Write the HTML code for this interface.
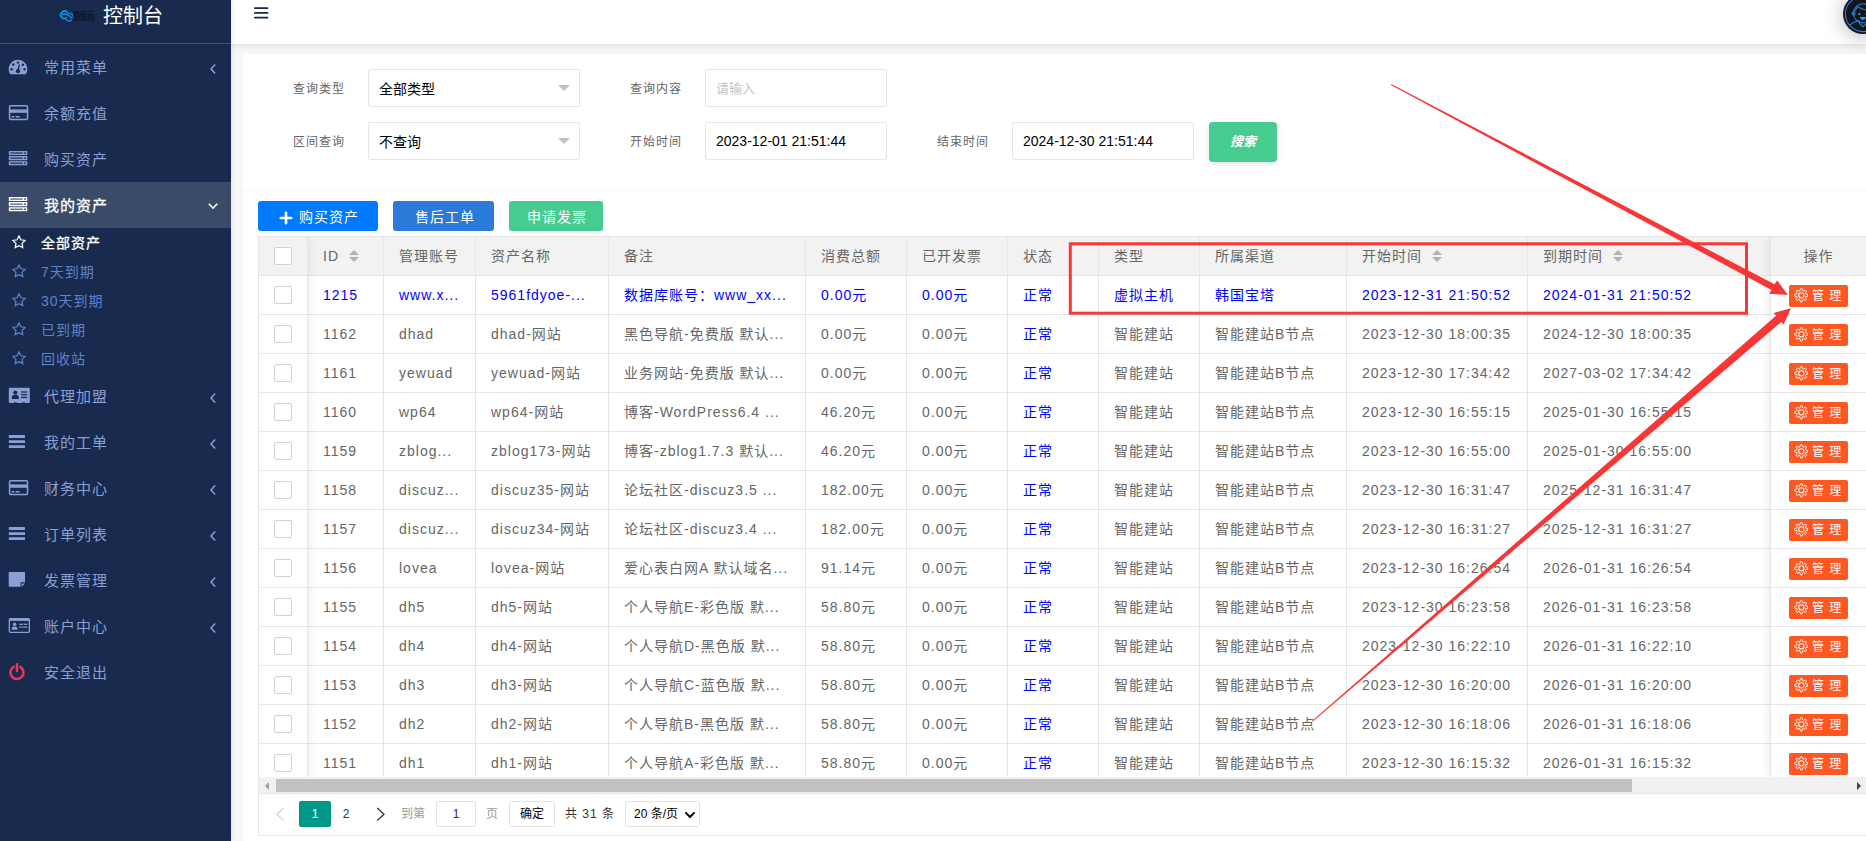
<!DOCTYPE html>
<html lang="zh-CN">
<head>
<meta charset="utf-8">
<title>控制台</title>
<style>
html,body{margin:0;padding:0}
body{width:1866px;height:841px;overflow:hidden;background:#f7f7f7;font-family:"Liberation Sans","Noto Sans CJK SC",sans-serif;font-size:14px;letter-spacing:1px;color:#666;position:relative}
*{box-sizing:border-box}
/* sidebar */
#side{position:absolute;left:0;top:0;width:231px;height:841px;background:#182a4e;z-index:5;box-shadow:1px 0 5px rgba(0,0,0,.10)}
#logo{position:absolute;left:0;top:0;width:231px;height:44px;border-bottom:1px solid #46536f}
#logo svg{position:absolute;left:58.500px;top:7.500px}
#logo .lt{position:absolute;left:73px;top:11px;font-size:7px;line-height:8px;color:#0b1426;font-weight:bold;letter-spacing:0;white-space:nowrap}
#logo .ls{position:absolute;left:72px;top:18.800px;font-size:2.700px;line-height:3px;color:#0b1426;font-weight:bold;letter-spacing:0;white-space:nowrap}
#logo .title{position:absolute;left:103px;top:1px;height:30px;line-height:30px;font-size:20px;color:#fff;letter-spacing:0;white-space:nowrap}
.mi{position:absolute;left:0;width:231px;height:46px;line-height:46px;color:#8a9fd4;font-size:15px;white-space:nowrap}
.mi.act{background:#3a4a69;color:#fff;-webkit-text-stroke:.300px #fff}
.mi .tx{position:absolute;left:44px;top:1px}
.mi svg.ic{position:absolute;left:8px;top:14px}
.mi svg.ch{position:absolute;left:207.500px;top:18.500px}
.sm{position:absolute;left:0;width:231px;height:29px;line-height:29px;color:#5d84c9;font-size:14px;white-space:nowrap}
.sm.act{color:#fff;-webkit-text-stroke:.300px #fff}
.sm .tx{position:absolute;left:41px;top:1px}
.sm svg{position:absolute;left:12px;top:7px}
/* header */
#top{position:absolute;left:231px;top:0;width:1635px;height:44px;background:#fff;box-shadow:0 1px 9px rgba(0,0,0,.11);z-index:3}
#ham{position:absolute;left:22.800px;top:7px}
#ava{position:absolute;left:1612px;top:-6.300px;z-index:4}
#avsh{position:absolute;left:1612px;top:-6px;width:40px;height:40px;border-radius:50%;box-shadow:0 2px 20px rgba(0,0,0,.30);z-index:3}
/* card */
#card{position:absolute;left:243px;top:54px;width:1623px;height:787px;background:#fff}
.lab{position:absolute;font-size:12px;color:#666;height:38px;line-height:38px;white-space:nowrap;margin-top:1px}
.inp{position:absolute;height:38px;border:1px solid #e6e6e6;border-radius:2px;background:#fff;font-size:14px;color:#000;letter-spacing:0;line-height:36px;padding-left:10px;white-space:nowrap}
.inp .cj{position:relative;top:1px}
.inp .ph{color:#c4c4c4;font-size:13px}
.inp .edge{position:absolute;right:9px;top:15px;width:0;height:0;border:6px solid transparent;border-top-color:#c2c2c2;border-bottom-width:0}
#sbtn{position:absolute;left:1209px;top:122px;width:68px;height:40px;background:#46cc91;border-radius:4px;box-shadow:0 2px 6px rgba(0,0,0,.10);color:#fff;font-size:13px;font-weight:bold;font-style:italic;text-align:center;line-height:40px;letter-spacing:0}
#hr{position:absolute;left:243px;top:190px;width:1623px;height:1px;background:#f6f6f6}
.btn{position:absolute;top:201px;height:30px;line-height:30px;border-radius:3px;color:#fff;font-size:14px;text-align:center;white-space:nowrap}
/* table */
#tbox{position:absolute;left:258px;top:236px;width:1608px;height:600px;border-left:1px solid #e6e6e6;border-top:1px solid #e6e6e6;border-bottom:1px solid #e6e6e6;overflow:hidden}
#tview{position:absolute;left:0;top:0;width:1607px;height:540px;overflow:hidden}
table{border-collapse:separate;border-spacing:0;table-layout:fixed;width:1529px}
th,td{height:39px;border-right:1px solid #e6e6e6;border-bottom:1px solid #e6e6e6;padding:0;font-weight:normal;text-align:left;vertical-align:middle}
th{background:#f2f2f2;color:#666}
td{background:#fff}
.cell{padding:0 15px;height:28px;line-height:28px;white-space:nowrap;overflow:hidden}
tr.blue td{color:#00f}
.cell.st{color:#00f}
.cb{display:block;width:18px;height:18px;border:1px solid #d2d2d2;border-radius:2px;background:#fff;margin:0 0 0 15px}
.sort{display:inline-block;position:relative;width:10px;height:14px;margin-left:10px;vertical-align:-2px}
.sort i{position:absolute;left:0;width:0;height:0;border:5px solid transparent}
.sort i.u{top:-4px;border-bottom-color:#b2b2b2}
.sort i.d{top:8px;border-top-color:#b2b2b2}
#fl{position:absolute;left:0;top:0;width:49px;height:540px;box-shadow:1px 0 8px rgba(0,0,0,.09);pointer-events:none}
#fr{position:absolute;left:1511px;top:0;width:96px;height:540px;background:#fff;border-left:1px solid #e6e6e6;box-shadow:-1px 0 8px rgba(0,0,0,.09)}
#fr .h{height:39px;line-height:38px;background:#f2f2f2;border-bottom:1px solid #e6e6e6;text-align:center;color:#666}
.oprow{height:39px;border-bottom:1px solid #e6e6e6;position:relative}
.mbtn{position:absolute;left:18px;top:9px;width:59px;height:22px;background:#ff5722;border-radius:2px;color:#fff;font-size:12px;line-height:22px;white-space:nowrap}
.mbtn .gear{position:absolute;left:4.700px;top:3.300px;width:14.600px;height:14.600px}
.mbtn .mt{position:absolute;left:23px;top:0}
/* scrollbar */
#sb{position:absolute;left:0;top:540px;width:1607px;height:17px;background:#f1f1f1}
#sb .th{position:absolute;left:17px;top:2px;width:1356px;height:13px;background:#c1c1c1}
#sb .al{position:absolute;left:6px;top:4.500px;width:0;height:0;border:4px solid transparent;border-right:4.500px solid #a3a3a3;border-left-width:0}
#sb .ar{position:absolute;right:5px;top:4.500px;width:0;height:0;border:4px solid transparent;border-left:4.500px solid #404040;border-right-width:0}
/* pager */
#pg{position:absolute;left:0;top:556px;width:1607px;height:42px;border-top:1px solid #e6e6e6;font-size:12px;color:#333;letter-spacing:0}
#pg .it{position:absolute;top:7px;height:26px;line-height:26px;white-space:nowrap}
#pg .box{border:1px solid #e2e2e2;border-radius:2px;background:#fff;text-align:center;line-height:24px}
/* annotations */
#ann{position:absolute;left:0;top:0;z-index:10;pointer-events:none}
</style>
</head>
<body>

<div id="side">
  <div id="logo">
    <svg width="16" height="16" viewBox="0 0 16 16"><g fill="none" stroke-linecap="round"><path d="M8.300 4.200C7 2.300 4.300 2.600 3.300 4.400 1.300 5 .8 7.800 2.400 9.200c.8 1.700 3.400 1.900 4.700.6" stroke="#0c9bee" stroke-width="1.700"/><path d="M7.600 11.700c1.300 1.900 4 1.600 5-.2 2-.6 2.500-3.400.9-4.800-.8-1.700-3.400-1.900-4.700-.6" stroke="#1877d6" stroke-width="1.700"/><path d="M3.500 6.600c2.500-1.300 6.500.8 8.800 2.900" stroke="#0c8fe6" stroke-width="1.500"/></g></svg>
    <span class="lt">鹏程云</span>
    <span class="ls">PENGCHENGYUN</span>
    <span class="title">控制台</span>
  </div>

<div class="mi" style="top:44px"><svg class="ic" width="24" height="18" viewBox="0 0 24 18"><path d="M2.220 16.200A9.300 9.300 0 1 1 17.780 16.200Z" fill="#8a9fd4"/><circle cx="10" cy="4.600" r="1.200" fill="#182a4e"/><circle cx="5.300" cy="6.500" r="1.200" fill="#182a4e"/><circle cx="14.900" cy="6.700" r="1.200" fill="#182a4e"/><circle cx="3.500" cy="11.300" r="1.200" fill="#182a4e"/><circle cx="16.500" cy="11.300" r="1.200" fill="#182a4e"/><circle cx="10" cy="13.200" r="2.100" fill="#182a4e"/><path d="M9.300 12.500L10.800 6.400l1.300.3-1.400 6.200z" fill="#182a4e"/></svg><span class="tx">常用菜单</span><svg class="ch" width="10" height="12" viewBox="0 0 10 12"><path d="M7.200 1.500L3 6l4.200 4.500" fill="none" stroke="#8a9fd4" stroke-width="1.500"/></svg></div>
<div class="mi" style="top:90px"><svg class="ic" width="24" height="18" viewBox="0 0 24 18"><rect x="1.550" y="1.650" width="18" height="13.800" rx="1.200" fill="none" stroke="#8a9fd4" stroke-width="1.500"/><rect x="1.500" y="5.400" width="18" height="3.400" fill="#8a9fd4"/><rect x="3.600" y="12" width="2.800" height="1.500" fill="#8a9fd4"/><rect x="7.700" y="12" width="3.900" height="1.500" fill="#8a9fd4"/></svg><span class="tx">余额充值</span></div>
<div class="mi" style="top:136px"><svg class="ic" width="24" height="18" viewBox="0 0 24 18"><rect x="0.800" y="1.0" width="18.500" height="4.050" rx=".500" fill="#8a9fd4"/><rect x="2.300" y="2.45" width="12.500" height="1.150" fill="#182a4e"/><rect x="16.200" y="2.28" width="1.700" height="1.500" fill="#182a4e"/><rect x="0.800" y="6.1" width="18.500" height="4.050" rx=".500" fill="#8a9fd4"/><rect x="2.300" y="7.55" width="12.500" height="1.150" fill="#182a4e"/><rect x="16.200" y="7.38" width="1.700" height="1.500" fill="#182a4e"/><rect x="0.800" y="11.2" width="18.500" height="4.050" rx=".500" fill="#8a9fd4"/><rect x="2.300" y="12.65" width="12.500" height="1.150" fill="#182a4e"/><rect x="16.200" y="12.48" width="1.700" height="1.500" fill="#182a4e"/></svg><span class="tx">购买资产</span></div>
<div class="mi act" style="top:182px"><svg class="ic" width="24" height="18" viewBox="0 0 24 18"><rect x="0.800" y="1.0" width="18.500" height="4.050" rx=".500" fill="#fff"/><rect x="2.300" y="2.45" width="12.500" height="1.150" fill="#3a4a69"/><rect x="16.200" y="2.28" width="1.700" height="1.500" fill="#3a4a69"/><rect x="0.800" y="6.1" width="18.500" height="4.050" rx=".500" fill="#fff"/><rect x="2.300" y="7.55" width="12.500" height="1.150" fill="#3a4a69"/><rect x="16.200" y="7.38" width="1.700" height="1.500" fill="#3a4a69"/><rect x="0.800" y="11.2" width="18.500" height="4.050" rx=".500" fill="#fff"/><rect x="2.300" y="12.65" width="12.500" height="1.150" fill="#3a4a69"/><rect x="16.200" y="12.48" width="1.700" height="1.500" fill="#3a4a69"/></svg><span class="tx">我的资产</span><svg class="ch" width="12" height="12" viewBox="0 0 12 12" style="left:207px;top:18px"><path d="M1.800 3.800L6 8l4.200-4.200" fill="none" stroke="#fff" stroke-width="1.600"/></svg></div>
<div class="sm act" style="top:228px"><svg width="14" height="14" viewBox="0 0 14 14"><path d="M7 .900l1.900 3.900 4.200.6-3.050 3 .72 4.200L7 10.600l-3.770 2 .72-4.200-3.050-3 4.200-.6z" fill="none" stroke="#fff" stroke-width="1.250" stroke-linejoin="miter"/></svg><span class="tx">全部资产</span></div>
<div class="sm" style="top:257px"><svg width="14" height="14" viewBox="0 0 14 14"><path d="M7 .900l1.900 3.900 4.200.6-3.050 3 .72 4.200L7 10.600l-3.770 2 .72-4.200-3.050-3 4.200-.6z" fill="none" stroke="#5d84c9" stroke-width="1.250" stroke-linejoin="miter"/></svg><span class="tx">7天到期</span></div>
<div class="sm" style="top:286px"><svg width="14" height="14" viewBox="0 0 14 14"><path d="M7 .900l1.900 3.900 4.200.6-3.050 3 .72 4.200L7 10.600l-3.770 2 .72-4.200-3.050-3 4.200-.6z" fill="none" stroke="#5d84c9" stroke-width="1.250" stroke-linejoin="miter"/></svg><span class="tx">30天到期</span></div>
<div class="sm" style="top:315px"><svg width="14" height="14" viewBox="0 0 14 14"><path d="M7 .900l1.900 3.900 4.200.6-3.050 3 .72 4.200L7 10.600l-3.770 2 .72-4.200-3.050-3 4.200-.6z" fill="none" stroke="#5d84c9" stroke-width="1.250" stroke-linejoin="miter"/></svg><span class="tx">已到期</span></div>
<div class="sm" style="top:344px"><svg width="14" height="14" viewBox="0 0 14 14"><path d="M7 .900l1.900 3.900 4.200.6-3.050 3 .72 4.200L7 10.600l-3.770 2 .72-4.200-3.050-3 4.200-.6z" fill="none" stroke="#5d84c9" stroke-width="1.250" stroke-linejoin="miter"/></svg><span class="tx">回收站</span></div>
<div class="mi" style="top:373px"><svg class="ic" width="24" height="18" viewBox="0 0 24 18"><path d="M1.800.800h19a1 1 0 0 1 1 1V15a1 1 0 0 1-1 1h-3.900v-.700h-2.500v.700H8.700v-.700H6.200v.700H1.800a1 1 0 0 1-1-1V1.800a1 1 0 0 1 1-1z" fill="#8a9fd4"/><circle cx="7.300" cy="5.500" r="2.100" fill="#182a4e"/><path d="M3.800 11.900V10.400c0-1.700 1.300-2.600 2.400-2.600h2.200c1.100 0 2.400.9 2.400 2.600v1.500z" fill="#182a4e"/><rect x="13" y="4.400" width="6.200" height="1.250" fill="#182a4e"/><rect x="13" y="7.100" width="6.200" height="1.250" fill="#182a4e"/><rect x="13" y="9.800" width="6.200" height="1.250" fill="#182a4e"/></svg><span class="tx">代理加盟</span><svg class="ch" width="10" height="12" viewBox="0 0 10 12"><path d="M7.200 1.500L3 6l4.200 4.500" fill="none" stroke="#8a9fd4" stroke-width="1.500"/></svg></div>
<div class="mi" style="top:419px"><svg class="ic" width="24" height="18" viewBox="0 0 24 18"><rect x="0.800" y="2.0" width="16.200" height="2.900" rx=".400" fill="#8a9fd4"/><rect x="0.800" y="7.2" width="16.200" height="2.900" rx=".400" fill="#8a9fd4"/><rect x="0.800" y="12.2" width="16.200" height="2.900" rx=".400" fill="#8a9fd4"/></svg><span class="tx">我的工单</span><svg class="ch" width="10" height="12" viewBox="0 0 10 12"><path d="M7.200 1.500L3 6l4.200 4.500" fill="none" stroke="#8a9fd4" stroke-width="1.500"/></svg></div>
<div class="mi" style="top:465px"><svg class="ic" width="24" height="18" viewBox="0 0 24 18"><rect x="1.550" y="1.650" width="18" height="13.800" rx="1.200" fill="none" stroke="#8a9fd4" stroke-width="1.500"/><rect x="1.500" y="5.400" width="18" height="3.400" fill="#8a9fd4"/><rect x="3.600" y="12" width="2.800" height="1.500" fill="#8a9fd4"/><rect x="7.700" y="12" width="3.900" height="1.500" fill="#8a9fd4"/></svg><span class="tx">财务中心</span><svg class="ch" width="10" height="12" viewBox="0 0 10 12"><path d="M7.200 1.500L3 6l4.200 4.500" fill="none" stroke="#8a9fd4" stroke-width="1.500"/></svg></div>
<div class="mi" style="top:511px"><svg class="ic" width="24" height="18" viewBox="0 0 24 18"><rect x="0.800" y="2.0" width="16.200" height="2.900" rx=".400" fill="#8a9fd4"/><rect x="0.800" y="7.2" width="16.200" height="2.900" rx=".400" fill="#8a9fd4"/><rect x="0.800" y="12.2" width="16.200" height="2.900" rx=".400" fill="#8a9fd4"/></svg><span class="tx">订单列表</span><svg class="ch" width="10" height="12" viewBox="0 0 10 12"><path d="M7.200 1.500L3 6l4.200 4.500" fill="none" stroke="#8a9fd4" stroke-width="1.500"/></svg></div>
<div class="mi" style="top:557px"><svg class="ic" width="24" height="18" viewBox="0 0 24 18"><path d="M1.500 1H16.200a.8.800 0 0 1 .8.800V11.300H13.300a.8.800 0 0 0-.8.800V15.700H1.500a.8.800 0 0 1-.8-.8V1.800A.8.800 0 0 1 1.500 1z" fill="#8a9fd4"/><path d="M13.600 12.400H17L13.600 15.700z" fill="#8a9fd4"/></svg><span class="tx">发票管理</span><svg class="ch" width="10" height="12" viewBox="0 0 10 12"><path d="M7.200 1.500L3 6l4.200 4.500" fill="none" stroke="#8a9fd4" stroke-width="1.500"/></svg></div>
<div class="mi" style="top:603px"><svg class="ic" width="24" height="18" viewBox="0 0 24 18"><rect x="1.350" y="1.650" width="20" height="13.700" rx="1.100" fill="none" stroke="#8a9fd4" stroke-width="1.300"/><rect x="1.300" y="1.600" width="20" height="2.300" fill="#8a9fd4"/><circle cx="6.600" cy="7.300" r="1.700" fill="#8a9fd4"/><path d="M3.800 12.700v-1.300c0-1.300 1-2 1.900-2h1.800c.9 0 1.900.7 1.900 2v1.300z" fill="#8a9fd4"/><rect x="11.200" y="6.700" width="8.200" height="1.200" fill="#8a9fd4"/><rect x="11.200" y="9.500" width="8.200" height="1.200" fill="#8a9fd4"/><rect x="15" y="6.700" width="1" height="1.200" fill="#182a4e"/><rect x="13.500" y="9.500" width="1" height="1.200" fill="#182a4e"/></svg><span class="tx">账户中心</span><svg class="ch" width="10" height="12" viewBox="0 0 10 12"><path d="M7.200 1.500L3 6l4.200 4.500" fill="none" stroke="#8a9fd4" stroke-width="1.500"/></svg></div>
<div class="mi" style="top:649px"><svg class="ic" width="24" height="18" viewBox="0 0 24 18"><path d="M5.600 3.900a6.500 6.500 0 1 0 6.700 0" fill="none" stroke="#ee3456" stroke-width="2.500" stroke-linecap="round"/><path d="M8.950 1.100v7" stroke="#ee3456" stroke-width="2.500" stroke-linecap="round"/></svg><span class="tx">安全退出</span></div>
</div>

<div id="top">
  <svg id="ham" width="16" height="13" viewBox="0 0 16 13"><g fill="#162a52"><rect x="0" y="0.150" width="14.400" height="1.900" rx=".900"/><rect x="0" y="4.900" width="14.400" height="1.900" rx=".900"/><rect x="0" y="9.650" width="14.400" height="1.900" rx=".900"/></g></svg>
  <div id="avsh"></div><svg id="ava" width="40" height="40" viewBox="0 0 40 40"><circle cx="20" cy="20" r="20" fill="#13161e"/><g fill="none" stroke="#2d7fd0" stroke-width="1.050"><circle cx="20" cy="20" r="17.600"/><circle cx="20" cy="19.300" r="9.600"/><circle cx="10.600" cy="19.600" r="1.500"/><path d="M11.500 17.500L14.800 12.700C18 15.500 23 16.700 29.300 15.700"/><path d="M6.800 31.200c3-3 7-4.200 9.700-4.700M33.200 31.200c-3-3-7-4.200-9.700-4.700M16.500 27v2.500l3.500 3.200 3.500-3.200V27"/></g><ellipse cx="16.400" cy="20" rx=".950" ry="1.350" fill="#2c9cff"/><ellipse cx="23.600" cy="20" rx=".950" ry="1.350" fill="#2c9cff"/><path d="M17.100 23h5.600a2.800 2.800 0 0 1-5.600 0z" fill="#2c9cff"/></svg>
</div>

<div id="card"></div>

<span class="lab" style="left:293px;top:69px">查询类型</span>
<div class="inp" style="left:368px;top:69px;width:212px"><span class="cj">全部类型</span><i class="edge"></i></div>
<span class="lab" style="left:630px;top:69px">查询内容</span>
<div class="inp" style="left:705px;top:69px;width:182px"><span class="ph">请输入</span></div>

<span class="lab" style="left:293px;top:122px">区间查询</span>
<div class="inp" style="left:368px;top:122px;width:212px"><span class="cj">不查询</span><i class="edge"></i></div>
<span class="lab" style="left:630px;top:122px">开始时间</span>
<div class="inp" style="left:705px;top:122px;width:182px">2023-12-01 21:51:44</div>
<span class="lab" style="left:937px;top:122px">结束时间</span>
<div class="inp" style="left:1012px;top:122px;width:182px">2024-12-30 21:51:44</div>
<div id="sbtn">搜索</div>

<div id="hr"></div>

<div class="btn" style="left:258px;width:120px;background:#007bff"><svg width="14" height="14" viewBox="0 0 14 14" style="position:absolute;left:21.200px;top:9.600px"><path d="M7 1.800v10.400M1.800 7h10.400" stroke="#fff" stroke-width="2.600" stroke-linecap="round"/></svg><span style="position:absolute;left:41px;top:1px">购买资产</span></div>
<div class="btn" style="left:393px;width:101px;background:#2a7ad9"><span style="position:absolute;left:22px;top:1px">售后工单</span></div>
<div class="btn" style="left:509px;width:94px;background:#46cc91"><span style="position:absolute;left:18px;top:1px">申请发票</span></div>

<div id="tbox">
  <div id="tview">
    <table>
      <colgroup><col style="width:49px"><col style="width:76px"><col style="width:92px"><col style="width:133px"><col style="width:197px"><col style="width:101px"><col style="width:101px"><col style="width:91px"><col style="width:101px"><col style="width:147px"><col style="width:181px"><col style="width:260px"></colgroup>
      <thead><tr>
        <th class="c0"><span class="cb"></span></th>
        <th><div class="cell">ID<span class="sort"><i class="u"></i><i class="d"></i></span></div></th>
        <th><div class="cell">管理账号</div></th>
        <th><div class="cell">资产名称</div></th>
        <th><div class="cell">备注</div></th>
        <th><div class="cell">消费总额</div></th>
        <th><div class="cell">已开发票</div></th>
        <th><div class="cell">状态</div></th>
        <th><div class="cell">类型</div></th>
        <th><div class="cell">所属渠道</div></th>
        <th><div class="cell">开始时间<span class="sort"><i class="u"></i><i class="d"></i></span></div></th>
        <th><div class="cell">到期时间<span class="sort"><i class="u"></i><i class="d"></i></span></div></th>
      </tr></thead>
      <tbody>
<tr class="blue"><td class="c0"><span class="cb"></span></td><td><div class="cell">1215</div></td><td><div class="cell">www.x...</div></td><td><div class="cell">5961fdyoe-...</div></td><td><div class="cell">数据库账号：www_xx...</div></td><td><div class="cell">0.00元</div></td><td><div class="cell">0.00元</div></td><td><div class="cell st">正常</div></td><td><div class="cell">虚拟主机</div></td><td><div class="cell">韩国宝塔</div></td><td><div class="cell">2023-12-31 21:50:52</div></td><td><div class="cell">2024-01-31 21:50:52</div></td></tr>
<tr><td class="c0"><span class="cb"></span></td><td><div class="cell">1162</div></td><td><div class="cell">dhad</div></td><td><div class="cell">dhad-网站</div></td><td><div class="cell">黑色导航-免费版 默认...</div></td><td><div class="cell">0.00元</div></td><td><div class="cell">0.00元</div></td><td><div class="cell st">正常</div></td><td><div class="cell">智能建站</div></td><td><div class="cell">智能建站B节点</div></td><td><div class="cell">2023-12-30 18:00:35</div></td><td><div class="cell">2024-12-30 18:00:35</div></td></tr>
<tr><td class="c0"><span class="cb"></span></td><td><div class="cell">1161</div></td><td><div class="cell">yewuad</div></td><td><div class="cell">yewuad-网站</div></td><td><div class="cell">业务网站-免费版 默认...</div></td><td><div class="cell">0.00元</div></td><td><div class="cell">0.00元</div></td><td><div class="cell st">正常</div></td><td><div class="cell">智能建站</div></td><td><div class="cell">智能建站B节点</div></td><td><div class="cell">2023-12-30 17:34:42</div></td><td><div class="cell">2027-03-02 17:34:42</div></td></tr>
<tr><td class="c0"><span class="cb"></span></td><td><div class="cell">1160</div></td><td><div class="cell">wp64</div></td><td><div class="cell">wp64-网站</div></td><td><div class="cell">博客-WordPress6.4 ...</div></td><td><div class="cell">46.20元</div></td><td><div class="cell">0.00元</div></td><td><div class="cell st">正常</div></td><td><div class="cell">智能建站</div></td><td><div class="cell">智能建站B节点</div></td><td><div class="cell">2023-12-30 16:55:15</div></td><td><div class="cell">2025-01-30 16:55:15</div></td></tr>
<tr><td class="c0"><span class="cb"></span></td><td><div class="cell">1159</div></td><td><div class="cell">zblog...</div></td><td><div class="cell">zblog173-网站</div></td><td><div class="cell">博客-zblog1.7.3 默认...</div></td><td><div class="cell">46.20元</div></td><td><div class="cell">0.00元</div></td><td><div class="cell st">正常</div></td><td><div class="cell">智能建站</div></td><td><div class="cell">智能建站B节点</div></td><td><div class="cell">2023-12-30 16:55:00</div></td><td><div class="cell">2025-01-30 16:55:00</div></td></tr>
<tr><td class="c0"><span class="cb"></span></td><td><div class="cell">1158</div></td><td><div class="cell">discuz...</div></td><td><div class="cell">discuz35-网站</div></td><td><div class="cell">论坛社区-discuz3.5 ...</div></td><td><div class="cell">182.00元</div></td><td><div class="cell">0.00元</div></td><td><div class="cell st">正常</div></td><td><div class="cell">智能建站</div></td><td><div class="cell">智能建站B节点</div></td><td><div class="cell">2023-12-30 16:31:47</div></td><td><div class="cell">2025-12-31 16:31:47</div></td></tr>
<tr><td class="c0"><span class="cb"></span></td><td><div class="cell">1157</div></td><td><div class="cell">discuz...</div></td><td><div class="cell">discuz34-网站</div></td><td><div class="cell">论坛社区-discuz3.4 ...</div></td><td><div class="cell">182.00元</div></td><td><div class="cell">0.00元</div></td><td><div class="cell st">正常</div></td><td><div class="cell">智能建站</div></td><td><div class="cell">智能建站B节点</div></td><td><div class="cell">2023-12-30 16:31:27</div></td><td><div class="cell">2025-12-31 16:31:27</div></td></tr>
<tr><td class="c0"><span class="cb"></span></td><td><div class="cell">1156</div></td><td><div class="cell">lovea</div></td><td><div class="cell">lovea-网站</div></td><td><div class="cell">爱心表白网A 默认域名...</div></td><td><div class="cell">91.14元</div></td><td><div class="cell">0.00元</div></td><td><div class="cell st">正常</div></td><td><div class="cell">智能建站</div></td><td><div class="cell">智能建站B节点</div></td><td><div class="cell">2023-12-30 16:26:54</div></td><td><div class="cell">2026-01-31 16:26:54</div></td></tr>
<tr><td class="c0"><span class="cb"></span></td><td><div class="cell">1155</div></td><td><div class="cell">dh5</div></td><td><div class="cell">dh5-网站</div></td><td><div class="cell">个人导航E-彩色版 默...</div></td><td><div class="cell">58.80元</div></td><td><div class="cell">0.00元</div></td><td><div class="cell st">正常</div></td><td><div class="cell">智能建站</div></td><td><div class="cell">智能建站B节点</div></td><td><div class="cell">2023-12-30 16:23:58</div></td><td><div class="cell">2026-01-31 16:23:58</div></td></tr>
<tr><td class="c0"><span class="cb"></span></td><td><div class="cell">1154</div></td><td><div class="cell">dh4</div></td><td><div class="cell">dh4-网站</div></td><td><div class="cell">个人导航D-黑色版 默...</div></td><td><div class="cell">58.80元</div></td><td><div class="cell">0.00元</div></td><td><div class="cell st">正常</div></td><td><div class="cell">智能建站</div></td><td><div class="cell">智能建站B节点</div></td><td><div class="cell">2023-12-30 16:22:10</div></td><td><div class="cell">2026-01-31 16:22:10</div></td></tr>
<tr><td class="c0"><span class="cb"></span></td><td><div class="cell">1153</div></td><td><div class="cell">dh3</div></td><td><div class="cell">dh3-网站</div></td><td><div class="cell">个人导航C-蓝色版 默...</div></td><td><div class="cell">58.80元</div></td><td><div class="cell">0.00元</div></td><td><div class="cell st">正常</div></td><td><div class="cell">智能建站</div></td><td><div class="cell">智能建站B节点</div></td><td><div class="cell">2023-12-30 16:20:00</div></td><td><div class="cell">2026-01-31 16:20:00</div></td></tr>
<tr><td class="c0"><span class="cb"></span></td><td><div class="cell">1152</div></td><td><div class="cell">dh2</div></td><td><div class="cell">dh2-网站</div></td><td><div class="cell">个人导航B-黑色版 默...</div></td><td><div class="cell">58.80元</div></td><td><div class="cell">0.00元</div></td><td><div class="cell st">正常</div></td><td><div class="cell">智能建站</div></td><td><div class="cell">智能建站B节点</div></td><td><div class="cell">2023-12-30 16:18:06</div></td><td><div class="cell">2026-01-31 16:18:06</div></td></tr>
<tr><td class="c0"><span class="cb"></span></td><td><div class="cell">1151</div></td><td><div class="cell">dh1</div></td><td><div class="cell">dh1-网站</div></td><td><div class="cell">个人导航A-彩色版 默...</div></td><td><div class="cell">58.80元</div></td><td><div class="cell">0.00元</div></td><td><div class="cell st">正常</div></td><td><div class="cell">智能建站</div></td><td><div class="cell">智能建站B节点</div></td><td><div class="cell">2023-12-30 16:15:32</div></td><td><div class="cell">2026-01-31 16:15:32</div></td></tr>
      </tbody>
    </table>
    <div id="fl"></div>
    <div id="fr">
      <div class="h">操作</div>
<div class="oprow"><span class="mbtn"><svg class="gear" viewBox="0 0 16 16" width="16" height="16"><path d="M6.59 3.10L7.11 0.75L8.89 0.75L9.41 3.10L10.47 3.54L12.49 2.25L13.75 3.51L12.46 5.53L12.90 6.59L15.25 7.11L15.25 8.89L12.90 9.41L12.46 10.47L13.75 12.49L12.49 13.75L10.47 12.46L9.41 12.90L8.89 15.25L7.11 15.25L6.59 12.90L5.53 12.46L3.51 13.75L2.25 12.49L3.54 10.47L3.10 9.41L0.75 8.89L0.75 7.11L3.10 6.59L3.54 5.53L2.25 3.51L3.51 2.25L5.53 3.54Z" fill="none" stroke="#fff" stroke-width="1" stroke-linejoin="round"/><circle cx="8" cy="8" r="2.900" fill="none" stroke="#fff" stroke-width="1.100"/></svg><span class="mt">管 理</span></span></div>
<div class="oprow"><span class="mbtn"><svg class="gear" viewBox="0 0 16 16" width="16" height="16"><path d="M6.59 3.10L7.11 0.75L8.89 0.75L9.41 3.10L10.47 3.54L12.49 2.25L13.75 3.51L12.46 5.53L12.90 6.59L15.25 7.11L15.25 8.89L12.90 9.41L12.46 10.47L13.75 12.49L12.49 13.75L10.47 12.46L9.41 12.90L8.89 15.25L7.11 15.25L6.59 12.90L5.53 12.46L3.51 13.75L2.25 12.49L3.54 10.47L3.10 9.41L0.75 8.89L0.75 7.11L3.10 6.59L3.54 5.53L2.25 3.51L3.51 2.25L5.53 3.54Z" fill="none" stroke="#fff" stroke-width="1" stroke-linejoin="round"/><circle cx="8" cy="8" r="2.900" fill="none" stroke="#fff" stroke-width="1.100"/></svg><span class="mt">管 理</span></span></div>
<div class="oprow"><span class="mbtn"><svg class="gear" viewBox="0 0 16 16" width="16" height="16"><path d="M6.59 3.10L7.11 0.75L8.89 0.75L9.41 3.10L10.47 3.54L12.49 2.25L13.75 3.51L12.46 5.53L12.90 6.59L15.25 7.11L15.25 8.89L12.90 9.41L12.46 10.47L13.75 12.49L12.49 13.75L10.47 12.46L9.41 12.90L8.89 15.25L7.11 15.25L6.59 12.90L5.53 12.46L3.51 13.75L2.25 12.49L3.54 10.47L3.10 9.41L0.75 8.89L0.75 7.11L3.10 6.59L3.54 5.53L2.25 3.51L3.51 2.25L5.53 3.54Z" fill="none" stroke="#fff" stroke-width="1" stroke-linejoin="round"/><circle cx="8" cy="8" r="2.900" fill="none" stroke="#fff" stroke-width="1.100"/></svg><span class="mt">管 理</span></span></div>
<div class="oprow"><span class="mbtn"><svg class="gear" viewBox="0 0 16 16" width="16" height="16"><path d="M6.59 3.10L7.11 0.75L8.89 0.75L9.41 3.10L10.47 3.54L12.49 2.25L13.75 3.51L12.46 5.53L12.90 6.59L15.25 7.11L15.25 8.89L12.90 9.41L12.46 10.47L13.75 12.49L12.49 13.75L10.47 12.46L9.41 12.90L8.89 15.25L7.11 15.25L6.59 12.90L5.53 12.46L3.51 13.75L2.25 12.49L3.54 10.47L3.10 9.41L0.75 8.89L0.75 7.11L3.10 6.59L3.54 5.53L2.25 3.51L3.51 2.25L5.53 3.54Z" fill="none" stroke="#fff" stroke-width="1" stroke-linejoin="round"/><circle cx="8" cy="8" r="2.900" fill="none" stroke="#fff" stroke-width="1.100"/></svg><span class="mt">管 理</span></span></div>
<div class="oprow"><span class="mbtn"><svg class="gear" viewBox="0 0 16 16" width="16" height="16"><path d="M6.59 3.10L7.11 0.75L8.89 0.75L9.41 3.10L10.47 3.54L12.49 2.25L13.75 3.51L12.46 5.53L12.90 6.59L15.25 7.11L15.25 8.89L12.90 9.41L12.46 10.47L13.75 12.49L12.49 13.75L10.47 12.46L9.41 12.90L8.89 15.25L7.11 15.25L6.59 12.90L5.53 12.46L3.51 13.75L2.25 12.49L3.54 10.47L3.10 9.41L0.75 8.89L0.75 7.11L3.10 6.59L3.54 5.53L2.25 3.51L3.51 2.25L5.53 3.54Z" fill="none" stroke="#fff" stroke-width="1" stroke-linejoin="round"/><circle cx="8" cy="8" r="2.900" fill="none" stroke="#fff" stroke-width="1.100"/></svg><span class="mt">管 理</span></span></div>
<div class="oprow"><span class="mbtn"><svg class="gear" viewBox="0 0 16 16" width="16" height="16"><path d="M6.59 3.10L7.11 0.75L8.89 0.75L9.41 3.10L10.47 3.54L12.49 2.25L13.75 3.51L12.46 5.53L12.90 6.59L15.25 7.11L15.25 8.89L12.90 9.41L12.46 10.47L13.75 12.49L12.49 13.75L10.47 12.46L9.41 12.90L8.89 15.25L7.11 15.25L6.59 12.90L5.53 12.46L3.51 13.75L2.25 12.49L3.54 10.47L3.10 9.41L0.75 8.89L0.75 7.11L3.10 6.59L3.54 5.53L2.25 3.51L3.51 2.25L5.53 3.54Z" fill="none" stroke="#fff" stroke-width="1" stroke-linejoin="round"/><circle cx="8" cy="8" r="2.900" fill="none" stroke="#fff" stroke-width="1.100"/></svg><span class="mt">管 理</span></span></div>
<div class="oprow"><span class="mbtn"><svg class="gear" viewBox="0 0 16 16" width="16" height="16"><path d="M6.59 3.10L7.11 0.75L8.89 0.75L9.41 3.10L10.47 3.54L12.49 2.25L13.75 3.51L12.46 5.53L12.90 6.59L15.25 7.11L15.25 8.89L12.90 9.41L12.46 10.47L13.75 12.49L12.49 13.75L10.47 12.46L9.41 12.90L8.89 15.25L7.11 15.25L6.59 12.90L5.53 12.46L3.51 13.75L2.25 12.49L3.54 10.47L3.10 9.41L0.75 8.89L0.75 7.11L3.10 6.59L3.54 5.53L2.25 3.51L3.51 2.25L5.53 3.54Z" fill="none" stroke="#fff" stroke-width="1" stroke-linejoin="round"/><circle cx="8" cy="8" r="2.900" fill="none" stroke="#fff" stroke-width="1.100"/></svg><span class="mt">管 理</span></span></div>
<div class="oprow"><span class="mbtn"><svg class="gear" viewBox="0 0 16 16" width="16" height="16"><path d="M6.59 3.10L7.11 0.75L8.89 0.75L9.41 3.10L10.47 3.54L12.49 2.25L13.75 3.51L12.46 5.53L12.90 6.59L15.25 7.11L15.25 8.89L12.90 9.41L12.46 10.47L13.75 12.49L12.49 13.75L10.47 12.46L9.41 12.90L8.89 15.25L7.11 15.25L6.59 12.90L5.53 12.46L3.51 13.75L2.25 12.49L3.54 10.47L3.10 9.41L0.75 8.89L0.75 7.11L3.10 6.59L3.54 5.53L2.25 3.51L3.51 2.25L5.53 3.54Z" fill="none" stroke="#fff" stroke-width="1" stroke-linejoin="round"/><circle cx="8" cy="8" r="2.900" fill="none" stroke="#fff" stroke-width="1.100"/></svg><span class="mt">管 理</span></span></div>
<div class="oprow"><span class="mbtn"><svg class="gear" viewBox="0 0 16 16" width="16" height="16"><path d="M6.59 3.10L7.11 0.75L8.89 0.75L9.41 3.10L10.47 3.54L12.49 2.25L13.75 3.51L12.46 5.53L12.90 6.59L15.25 7.11L15.25 8.89L12.90 9.41L12.46 10.47L13.75 12.49L12.49 13.75L10.47 12.46L9.41 12.90L8.89 15.25L7.11 15.25L6.59 12.90L5.53 12.46L3.51 13.75L2.25 12.49L3.54 10.47L3.10 9.41L0.75 8.89L0.75 7.11L3.10 6.59L3.54 5.53L2.25 3.51L3.51 2.25L5.53 3.54Z" fill="none" stroke="#fff" stroke-width="1" stroke-linejoin="round"/><circle cx="8" cy="8" r="2.900" fill="none" stroke="#fff" stroke-width="1.100"/></svg><span class="mt">管 理</span></span></div>
<div class="oprow"><span class="mbtn"><svg class="gear" viewBox="0 0 16 16" width="16" height="16"><path d="M6.59 3.10L7.11 0.75L8.89 0.75L9.41 3.10L10.47 3.54L12.49 2.25L13.75 3.51L12.46 5.53L12.90 6.59L15.25 7.11L15.25 8.89L12.90 9.41L12.46 10.47L13.75 12.49L12.49 13.75L10.47 12.46L9.41 12.90L8.89 15.25L7.11 15.25L6.59 12.90L5.53 12.46L3.51 13.75L2.25 12.49L3.54 10.47L3.10 9.41L0.75 8.89L0.75 7.11L3.10 6.59L3.54 5.53L2.25 3.51L3.51 2.25L5.53 3.54Z" fill="none" stroke="#fff" stroke-width="1" stroke-linejoin="round"/><circle cx="8" cy="8" r="2.900" fill="none" stroke="#fff" stroke-width="1.100"/></svg><span class="mt">管 理</span></span></div>
<div class="oprow"><span class="mbtn"><svg class="gear" viewBox="0 0 16 16" width="16" height="16"><path d="M6.59 3.10L7.11 0.75L8.89 0.75L9.41 3.10L10.47 3.54L12.49 2.25L13.75 3.51L12.46 5.53L12.90 6.59L15.25 7.11L15.25 8.89L12.90 9.41L12.46 10.47L13.75 12.49L12.49 13.75L10.47 12.46L9.41 12.90L8.89 15.25L7.11 15.25L6.59 12.90L5.53 12.46L3.51 13.75L2.25 12.49L3.54 10.47L3.10 9.41L0.75 8.89L0.75 7.11L3.10 6.59L3.54 5.53L2.25 3.51L3.51 2.25L5.53 3.54Z" fill="none" stroke="#fff" stroke-width="1" stroke-linejoin="round"/><circle cx="8" cy="8" r="2.900" fill="none" stroke="#fff" stroke-width="1.100"/></svg><span class="mt">管 理</span></span></div>
<div class="oprow"><span class="mbtn"><svg class="gear" viewBox="0 0 16 16" width="16" height="16"><path d="M6.59 3.10L7.11 0.75L8.89 0.75L9.41 3.10L10.47 3.54L12.49 2.25L13.75 3.51L12.46 5.53L12.90 6.59L15.25 7.11L15.25 8.89L12.90 9.41L12.46 10.47L13.75 12.49L12.49 13.75L10.47 12.46L9.41 12.90L8.89 15.25L7.11 15.25L6.59 12.90L5.53 12.46L3.51 13.75L2.25 12.49L3.54 10.47L3.10 9.41L0.75 8.89L0.75 7.11L3.10 6.59L3.54 5.53L2.25 3.51L3.51 2.25L5.53 3.54Z" fill="none" stroke="#fff" stroke-width="1" stroke-linejoin="round"/><circle cx="8" cy="8" r="2.900" fill="none" stroke="#fff" stroke-width="1.100"/></svg><span class="mt">管 理</span></span></div>
<div class="oprow"><span class="mbtn"><svg class="gear" viewBox="0 0 16 16" width="16" height="16"><path d="M6.59 3.10L7.11 0.75L8.89 0.75L9.41 3.10L10.47 3.54L12.49 2.25L13.75 3.51L12.46 5.53L12.90 6.59L15.25 7.11L15.25 8.89L12.90 9.41L12.46 10.47L13.75 12.49L12.49 13.75L10.47 12.46L9.41 12.90L8.89 15.25L7.11 15.25L6.59 12.90L5.53 12.46L3.51 13.75L2.25 12.49L3.54 10.47L3.10 9.41L0.75 8.89L0.75 7.11L3.10 6.59L3.54 5.53L2.25 3.51L3.51 2.25L5.53 3.54Z" fill="none" stroke="#fff" stroke-width="1" stroke-linejoin="round"/><circle cx="8" cy="8" r="2.900" fill="none" stroke="#fff" stroke-width="1.100"/></svg><span class="mt">管 理</span></span></div>
    </div>
  </div>
  <div id="sb"><i class="al"></i><div class="th"></div><i class="ar"></i></div>
  <div id="pg">
    <svg style="position:absolute;left:16px;top:13px" width="10" height="14" viewBox="0 0 10 14"><path d="M8.600 1L1.800 7.200l6.800 6.200" fill="none" stroke="#d2d2d2" stroke-width="1.200"/></svg>
    <div class="it" style="left:40px;width:32px;background:#009688;color:#fff;border-radius:2px;text-align:center">1</div>
    <div class="it" style="left:72px;width:30px;text-align:center;color:#333">2</div>
    <svg style="position:absolute;left:117px;top:13px" width="10" height="14" viewBox="0 0 10 14"><path d="M1.200 1L8 7.200l-6.800 6.200" fill="none" stroke="#333" stroke-width="1.300"/></svg>
    <div class="it" style="left:142px;color:#999">到第</div>
    <div class="it box" style="left:177px;width:40px;color:#333">1</div>
    <div class="it" style="left:227px;color:#999">页</div>
    <div class="it box" style="left:250px;width:46px;color:#000">确定</div>
    <div class="it" style="left:306px;color:#333;letter-spacing:1px">共 31 条</div>
    <div class="it box" style="left:366px;width:75px;color:#000;text-align:left;padding-left:8px;border-radius:3px">20 条/页<svg width="12" height="8" viewBox="0 0 12 8" style="position:absolute;right:3.200px;top:9px"><path d="M1.400 1.400L6 6l4.600-4.600" fill="none" stroke="#000" stroke-width="2"/></svg></div>
  </div>
</div>

<svg id="ann" width="1866" height="841" viewBox="0 0 1866 841">
  <rect x="1070.300" y="243.800" width="676.200" height="69.400" fill="none" stroke="#f93535" stroke-width="3"/>
  <polygon points="1390.870,84.940 1771.560,289.960 1769.200,293.800 1787.900,295 1777.100,280.400 1774.560,284.300 1391.330,84.060" fill="#f93535"/>
  <polygon points="1311.970,721.020 1775.980,315.750 1773.600,313 1791,308.200 1783.550,324.450 1781.340,321.950 1312.630,721.780" fill="#f93535"/>
</svg>

</body>
</html>
